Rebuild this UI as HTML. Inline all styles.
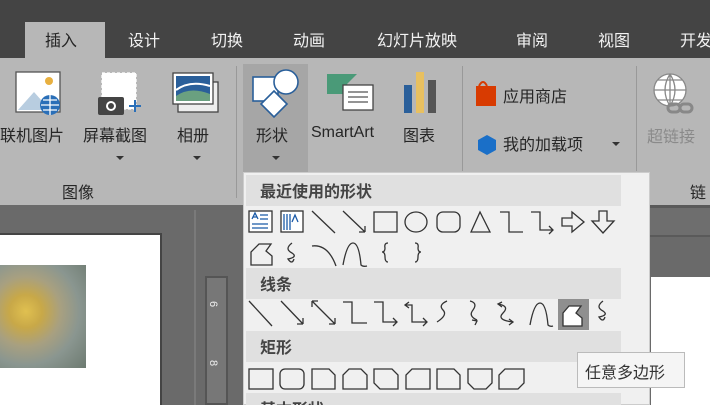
<!DOCTYPE html>
<html><head><meta charset="utf-8"><style>
*{margin:0;padding:0;box-sizing:border-box}
html{width:710px;height:405px;overflow:hidden}
body{width:710px;height:405px;overflow:hidden;position:relative;background:#6a6a6a;font-family:"Liberation Sans","Noto Sans CJK SC",sans-serif;color:#262626}
.a{position:absolute;white-space:nowrap}
.tab{position:absolute;top:27px;font-size:16px;color:#f2f2f2;white-space:nowrap}
.lbl{font-size:16px;color:#262626}
.hd{position:absolute;left:246px;width:375px;height:31px;background:#e0e0e0;font-size:16px;font-weight:bold;color:#444;padding:3px 0 0 14px}
</style></head><body>
<div class="a" style="left:0;top:0;width:710px;height:58px;background:#444"></div>
<div class="a" style="left:25px;top:22px;width:80px;height:37px;background:#b7b7b7"></div>
<div class="tab" style="left:45px;color:#262626">插入</div>
<div class="tab" style="left:128px">设计</div>
<div class="tab" style="left:211px">切换</div>
<div class="tab" style="left:293px">动画</div>
<div class="tab" style="left:377px">幻灯片放映</div>
<div class="tab" style="left:516px">审阅</div>
<div class="tab" style="left:598px">视图</div>
<div class="tab" style="left:680px">开发</div>
<div class="a" style="left:0;top:58px;width:710px;height:147px;background:#b7b7b7"></div>
<div class="a" style="left:243px;top:64px;width:65px;height:108px;background:#a6a6a6"></div>
<div class="a" style="left:236px;top:66px;width:1px;height:132px;background:#999"></div>
<div class="a" style="left:462px;top:66px;width:1px;height:105px;background:#999"></div>
<div class="a" style="left:636px;top:66px;width:1px;height:105px;background:#999"></div>
<div class="a lbl" style="left:0;top:122px">联机图片</div>
<div class="a lbl" style="left:83px;top:122px">屏幕截图</div>
<div class="a lbl" style="left:177px;top:122px">相册</div>
<div class="a lbl" style="left:256px;top:122px">形状</div>
<div class="a lbl" style="left:311px;top:124px;font-size:16px">SmartArt</div>
<div class="a lbl" style="left:403px;top:122px">图表</div>
<div class="a lbl" style="left:503px;top:83px">应用商店</div>
<div class="a lbl" style="left:503px;top:131px">我的加载项</div>
<div class="a lbl" style="left:647px;top:123px;color:#8a8a8a">超链接</div>
<div class="a lbl" style="left:62px;top:179px">图像</div>
<div class="a lbl" style="left:690px;top:179px">链</div>
<div class="a" style="left:650px;top:205px;width:60px;height:3px;background:#5a5a5a"></div>
<div class="a" style="left:650px;top:208px;width:60px;height:27px;background:#6e6e6e"></div>
<div class="a" style="left:650px;top:235px;width:60px;height:2px;background:#5a5a5a"></div>
<div class="a" style="left:651px;top:277px;width:59px;height:128px;background:#fff"></div>
<div class="a" style="left:0;top:233px;width:162px;height:172px;background:#fff;border-top:2px solid #444;border-right:2px solid #444"></div>
<div class="a" style="left:0;top:265px;width:86px;height:103px;background:radial-gradient(circle at 30% 45%,#e0c050 0,#c8a848 20%,#a8a080 42%,#8a9690 65%,#6d7a70 100%)"></div>
<div class="a" style="left:194px;top:210px;width:2px;height:195px;background:#7a7a7a"></div>
<div class="a" style="left:205px;top:276px;width:23px;height:129px;background:#777;border:2px solid #555"></div>
<div class="a" style="left:210px;top:298px;font-size:11px;color:#eee;transform:rotate(90deg)">6</div>
<div class="a" style="left:210px;top:357px;font-size:11px;color:#eee;transform:rotate(90deg)">8</div>
<div class="a" style="left:243px;top:172px;width:407px;height:233px;background:#f0f0f0;border:1px solid #ccc"></div>
<div class="hd" style="top:175px">最近使用的形状</div>
<div class="hd" style="top:268px">线条</div>
<div class="hd" style="top:331px">矩形</div>
<div class="hd" style="top:393px;height:12px;overflow:hidden">基本形状</div>
<div class="a" style="left:558px;top:299px;width:31px;height:31px;background:#8f8f8f"></div>
<svg class="a" style="left:0;top:0" width="710" height="405" viewBox="0 0 710 405" fill="none" stroke="#333" stroke-width="1.3">
<rect x="16" y="72" width="44" height="40" fill="#fff" stroke="#555"/>
<path d="M18 110 L34 92 L50 110Z" fill="#b8cde0" stroke="none"/>
<circle cx="49" cy="81" r="4" fill="#e8b040" stroke="none"/>
<circle cx="50" cy="105" r="10" fill="#2a6fb8" stroke="none"/>
<path d="M41 105h18M50 95v20M43 100h14M43 110h14" stroke="#fff"/>
<rect x="102" y="73" width="34" height="36" fill="#fff" stroke="#fff" stroke-dasharray="3 2"/>
<rect x="98" y="97" width="26" height="18" rx="2" fill="#444" stroke="none"/>
<circle cx="111" cy="106" r="5" fill="#fff" stroke="none"/><circle cx="111" cy="106" r="3" fill="#444" stroke="none"/>
<path d="M135 100v12M129 106h12" stroke="#2a6fb8" stroke-width="2"/>
<rect x="178" y="82" width="40" height="30" fill="#eee" stroke="#444"/>
<rect x="173" y="73" width="40" height="31" fill="#fff" stroke="#444"/>
<rect x="176" y="76" width="34" height="25" fill="#2a5f9a" stroke="none"/>
<path d="M176 96 Q190 86 210 94 V101 H176Z" fill="#6aa080" stroke="none"/>
<path d="M176 90 Q190 80 210 86" stroke="#fff" stroke-width="2"/>
<rect x="253" y="77" width="25" height="24" fill="#fff" stroke="#2a5f9a" stroke-width="1.6"/>
<circle cx="286" cy="82" r="12" fill="#fff" stroke="#2a5f9a" stroke-width="1.6"/>
<path d="M274 91 L287 104 L274 117 L261 104Z" fill="#fff" stroke="#2a5f9a" stroke-width="1.6"/>
<path d="M327 74 h30 l-10 10 l10 10 h-30Z" fill="#4a9a78" stroke="none"/>
<rect x="343" y="85" width="30" height="25" fill="#fff" stroke="#444"/>
<path d="M348 92h20M348 97h20M348 102h20" stroke="#555"/>
<rect x="404" y="85" width="8" height="28" fill="#2a5f9a" stroke="none"/>
<rect x="416" y="72" width="8" height="41" fill="#e8c060" stroke="none"/>
<rect x="428" y="80" width="8" height="33" fill="#555" stroke="none"/>
<path d="M476 86 h20 v20 h-20Z" fill="#d83b01" stroke="none"/>
<path d="M479 86 q4 -8 8 0" stroke="#d83b01" stroke-width="2"/>
<path d="M478 140 l9 -5 l9 5 v10 l-9 5 l-9 -5Z" fill="#1a6fc8" stroke="none"/>
<path d="M116 156 l4 4 l4 -4Z M193 156 l4 4 l4 -4Z M272 156 l4 4 l4 -4Z M612 142 l4 4 l4 -4Z" fill="#333" stroke="none"/>
<circle cx="670" cy="90" r="16" fill="#fff" stroke="#888"/>
<path d="M654 90h32M670 74v32M658 80h24M658 100h24M670 74q-10 16 0 32q10 -16 0 -32" stroke="#888"/>
<rect x="668" y="104" width="12" height="8" rx="4" stroke="#888" stroke-width="3"/>
<rect x="680" y="104" width="12" height="8" rx="4" stroke="#888" stroke-width="3"/>
<rect x="249" y="211" width="23" height="21" fill="#fff"/><path d="M252 219l3-6 3 6M253 217h4M260 215h8M260 219h8M252 224h16M252 228h16" stroke="#1a5aa8"/>
<rect x="281" y="211" width="22" height="21" fill="#fff"/><path d="M284 214v16M287 214v16M290 214v16M292 222l3-7 3 7" stroke="#1a5aa8"/>
<path d="M312 211 L335 233"/><path d="M343 211 L365 232 M365 232 h-6 M365 232 v-6"/>
<rect x="374" y="212" width="23" height="20"/><ellipse cx="416" cy="222" rx="11" ry="10"/><rect x="437" y="212" width="23" height="20" rx="6"/>
<path d="M471 232 L480 212 L490 232Z"/><path d="M500 212h9v20h14"/><path d="M531 212h9v18h13 M549 226l4 4-4 4"/>
<path d="M562 218h10v-6l12 10-12 10v-6h-10Z"/><path d="M599 211h8v10h7l-11 12-11-12h7Z"/>
<path d="M251 265v-13l8-8h12l-5 7 6 5v9Z"/><path d="M292 243 q-8 6 0 10 q6 4-4 6 q4 6 6 0"/>
<path d="M312 246 q16-2 24 20"/><path d="M343 265 q4-22 10-22 q6 0 8 22 q2 2 6 1"/>
<path d="M388 243 q-4 0-3 5 q0 4-3 4 q3 0 3 5 q0 5 3 5"/><path d="M415 243 q4 0 3 5 q0 4 3 4 q-3 0-3 5 q0 5-3 5"/>
<path d="M249 301 L272 326"/><path d="M281 301 L303 324 M303 324h-6 M303 324v-6"/>
<path d="M312 301 L335 324 M312 301h6 M312 301v6 M335 324h-6 M335 324v-6"/>
<path d="M343 302h9v21h15"/><path d="M374 302h9v20h14 M393 318l4 4-4 4"/>
<path d="M409 302l-4 3 4 3 M405 305h7v17h15 M423 318l4 4-4 4"/>
<path d="M447 301 q-9 4-4 9 q5 5-6 12"/><path d="M470 301 q8 2 3 9 q-5 6 4 10 M472 320l5 1-2 4"/>
<path d="M502 302l-4 2 4 3 M498 304 q12 2 5 9 q-7 7 10 9 M509 319l4 3-4 3"/>
<path d="M530 325 q4-22 10-22 q6 0 8 22 q2 2 5 1"/>
<path d="M563 326v-13l6-7h12l-5 7 6 5v8Z" fill="#fff"/>
<path d="M603 301 q-8 6 0 10 q6 4-4 6 q4 6 6 0"/>
<rect x="249" y="369" width="24" height="20"/>
<rect x="280" y="369" width="24" height="20" rx="5"/>
<path d="M312 369h17l6 6v14h-23Z"/><path d="M343 389v-14l6-6h12l6 6v14Z"/>
<path d="M374 369h18l6 6v14h-18l-6-6Z"/><path d="M406 389v-14l6-6h18v20Z"/>
<path d="M437 369h17l6 6v14h-23Z"/><path d="M468 369h24v14l-6 6h-12l-6-6Z"/>
<path d="M505 369h19v14l-6 6h-19v-14Z"/>
</svg>
<div class="a" style="left:577px;top:352px;width:108px;height:36px;background:#f5f5f5;border:1px solid #bbb;font-size:16px;color:#333;padding:6px 0 0 7px">任意多边形</div>
</body></html>
